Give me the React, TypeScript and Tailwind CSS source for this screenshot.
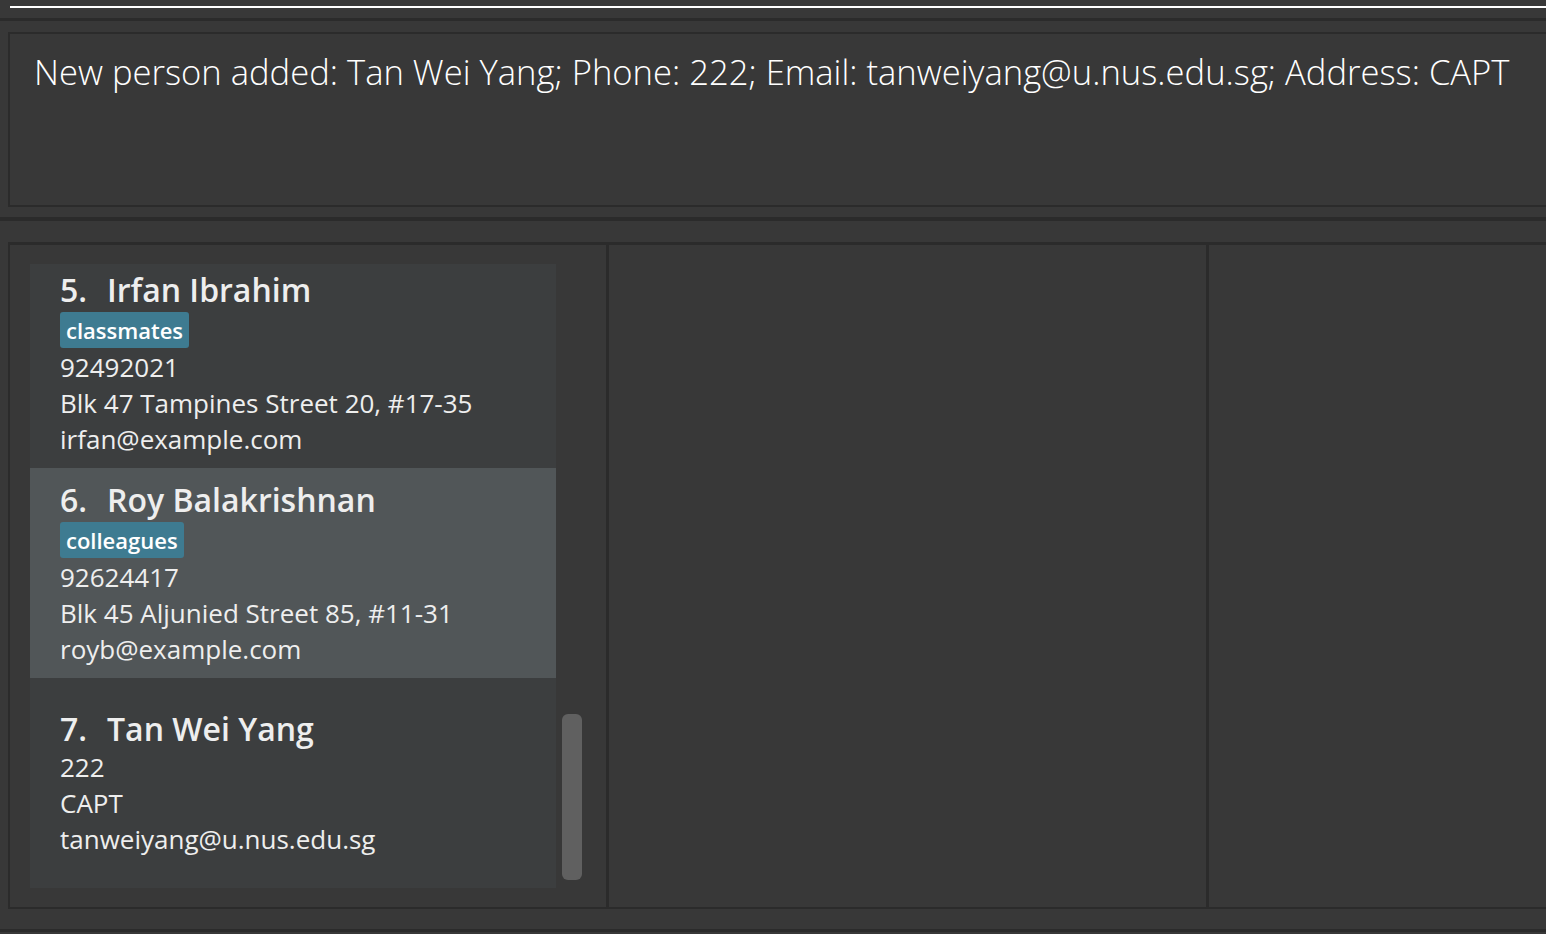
import React from "react";

const cardFont = { fontFamily: '"Open Sans", "Noto Sans", sans-serif' };

type Person = { idx: number; name: string; tag?: string; phone: string; addr: string; email: string; selected?: boolean };

const people: Person[] = [
  { idx: 5, name: "Irfan Ibrahim", tag: "classmates", phone: "92492021", addr: "Blk 47 Tampines Street 20, #17-35", email: "irfan@example.com" },
  { idx: 6, name: "Roy Balakrishnan", tag: "colleagues", phone: "92624417", addr: "Blk 45 Aljunied Street 85, #11-31", email: "royb@example.com", selected: true },
  { idx: 7, name: "Tan Wei Yang", phone: "222", addr: "CAPT", email: "tanweiyang@u.nus.edu.sg" },
];

function Card({ p }: { p: Person }) {
  return (
    <div
      className={`h-[210px] w-[526px] shrink-0 flex flex-col justify-center pl-[30px] text-[#eeeeee] ${p.selected ? "bg-[#515658]" : "bg-[#3c3e3f]"}`}
      style={cardFont}
    >
      <div className="text-[32px] font-semibold leading-[40px] whitespace-nowrap flex">
        <span className="w-[47px]">{p.idx}.</span>
        <span>{p.name}</span>
      </div>
      {p.tag && (
        <div className="flex mt-[2px] mb-[1px]">
          <span className="bg-[#3e7b91] text-white text-[22px] font-semibold leading-[36px] px-[6px] rounded-[3px]">{p.tag}</span>
        </div>
      )}
      <div className="text-[26px] leading-[36px]">{p.phone}</div>
      <div className="text-[26px] leading-[36px]">{p.addr}</div>
      <div className="text-[26px] leading-[36px]">{p.email}</div>
    </div>
  );
}

export default function App() {
  return (
    <div className="w-[1546px] h-[934px] bg-[#383838] overflow-hidden flex flex-col">
      <div className="h-[6px] shrink-0" />
      <div className="h-[2px] ml-[10px] bg-white shrink-0" />
      <div className="h-[10px] shrink-0" />
      <div className="h-[3px] bg-[#2b2b2b] shrink-0" />
      <div className="h-[11px] shrink-0" />
      <div className="ml-[8px] h-[175px] shrink-0 border-2 border-r-0 border-[#2b2b2b] pl-[24px] pt-[14px]">
        <div
          className="text-white text-[34.6px] font-light leading-[48px] whitespace-nowrap"
          style={cardFont}
        >
          New person added: Tan Wei Yang; Phone: 222; Email: tanweiyang@u.nus.edu.sg; Address: CAPT
        </div>
      </div>
      <div className="h-[10px] shrink-0" />
      <div className="h-[4px] bg-[#2b2b2b] shrink-0" />
      <div className="h-[21px] shrink-0" />
      <div className="ml-[8px] h-[667px] shrink-0 flex border-t-[3px] border-l-2 border-b-2 border-[#2b2b2b]">
        <div className="w-[599px] shrink-0 border-r-[3px] border-[#2b2b2b] flex pl-[20px] pt-[19px]">
          <div className="w-[526px] h-[624px] overflow-hidden flex flex-col">
            <div className="-mt-[6px] flex flex-col">
              {people.map((p) => (
                <Card key={p.idx} p={p} />
              ))}
            </div>
          </div>
          <div className="ml-[6px] w-[20px] flex flex-col">
            <div className="h-[450px]" />
            <div className="h-[166px] rounded-[6px] bg-[#606060]" />
          </div>
        </div>
        <div className="w-[600px] shrink-0 border-r-[3px] border-[#2b2b2b]" />
        <div className="flex-1" />
      </div>
      <div className="h-[20px] shrink-0" />
      <div className="h-[3px] bg-[#2b2b2b] shrink-0" />
      <div className="flex-1" />
    </div>
  );
}
